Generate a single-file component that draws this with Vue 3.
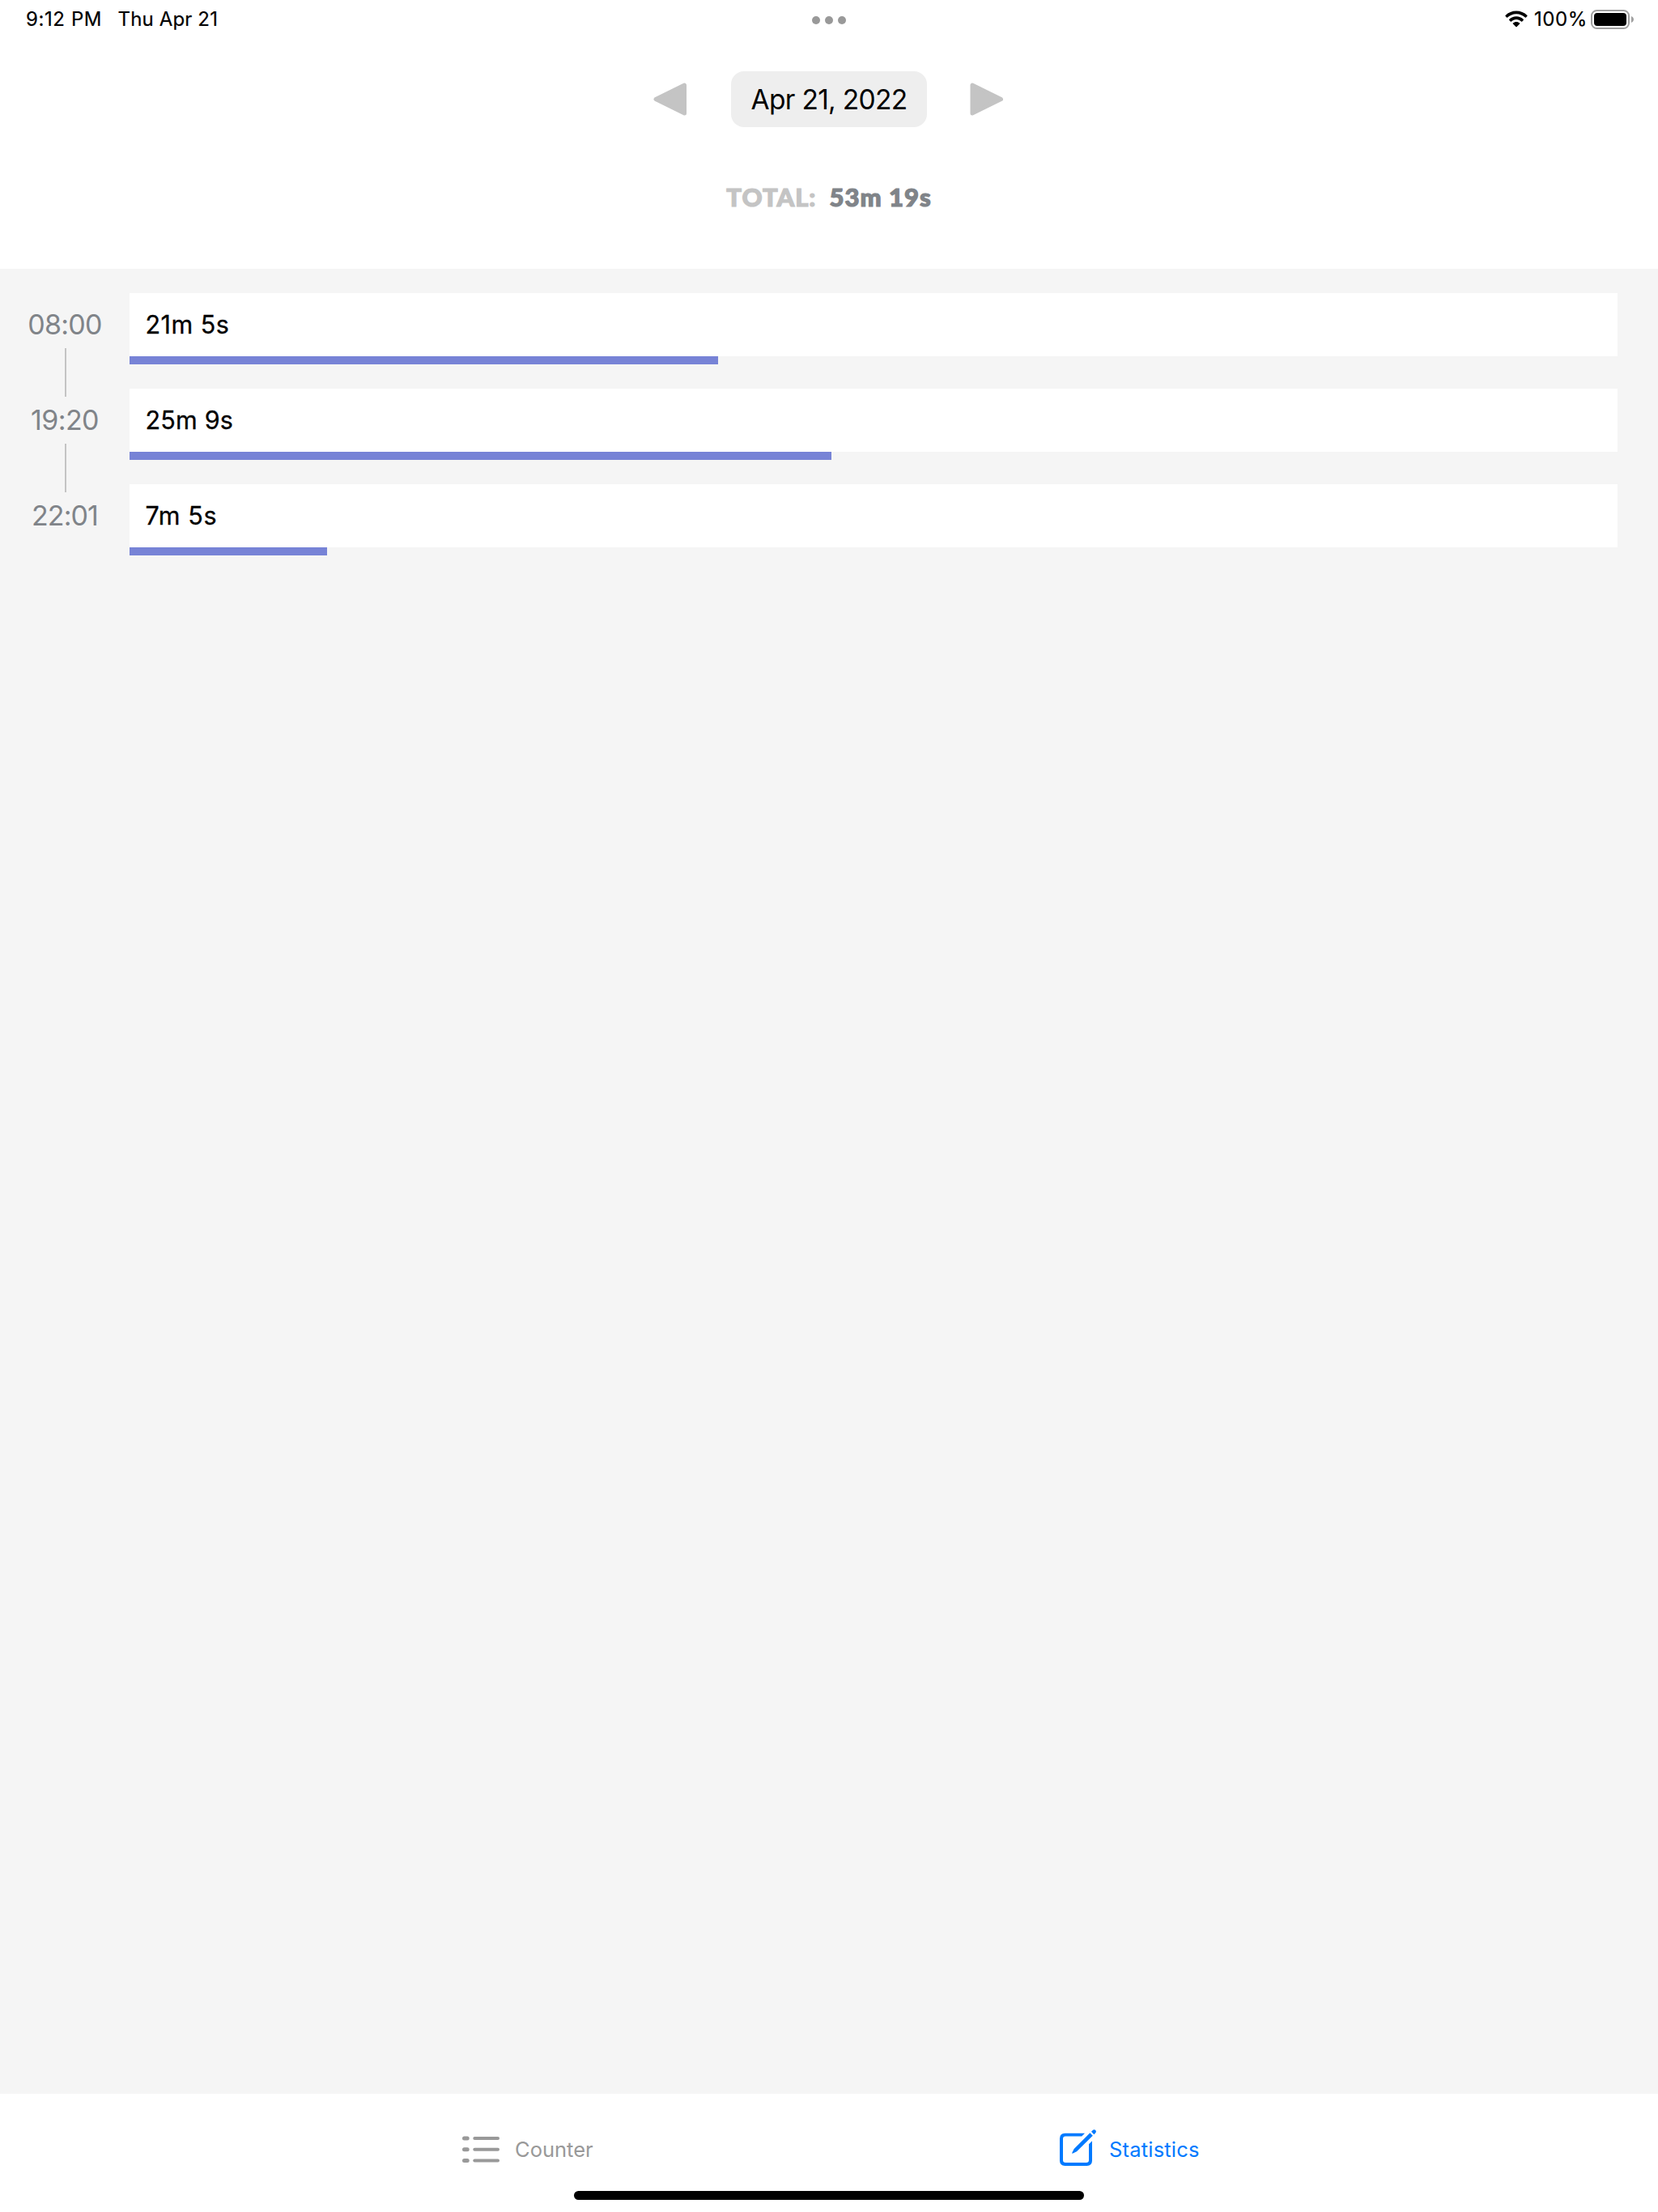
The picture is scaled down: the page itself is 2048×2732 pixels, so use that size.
<script setup>
const total = 53 * 60 + 19
const sessions = [
  { time: '08:00', label: '21m 5s', seconds: 1265, tracking: -0.75, labelTracking: 0.5 },
  { time: '19:20', label: '25m 9s', seconds: 1509, tracking: -0.6, labelTracking: 0.2 },
  { time: '22:01', label: '7m 5s', seconds: 425, tracking: -0.9, labelTracking: 0.6 },
]
</script>

<template>
  <div class="screen">
    <header class="status">
      <div class="status-left">
        <span class="clock">9:12 PM</span>
        <span class="day">Thu Apr 21</span>
      </div>
      <div class="dots"><i></i><i></i><i></i></div>
      <div class="status-right">
        <svg class="wifi" width="28" height="21" viewBox="0 0 28 21">
          <path d="M14 0.6C8.8 .6 4.1 2.6 .6 5.9c-.4.4-.4.8 0 1.2L2 8.5c.4.4.8.4 1.2 0C6.1 5.8 9.8 4.2 14 4.2s7.900 1.600 10.800 4.300c.4.400.8.400 1.200 0l1.400-1.400c.4-.4.4-.8 0-1.200C23.900 2.600 19.200.6 14 .6z" />
          <path d="M14 7.300c-3.400 0-6.400 1.300-8.700 3.400-.4.400-.4.800 0 1.200l1.500 1.500c.3.300.8.300 1.200 0 1.600-1.500 3.700-2.400 6-2.400s4.400.9 6 2.400c.4.300.9.300 1.200 0l1.500-1.500c.4-.4.4-.8 0-1.200C20.400 8.600 17.400 7.300 14 7.300z" />
          <path d="M14 13.900c-1.600 0-3 .6-4.100 1.500-.4.400-.4.800 0 1.200l3.500 3.500c.4.400.8.400 1.200 0l3.500-3.500c.4-.4.4-.8 0-1.200-1.100-.9-2.500-1.500-4.100-1.500z" />
        </svg>
        <span class="percent">100%</span>
        <svg class="battery" width="54" height="24" viewBox="0 0 54 24">
          <rect x="1" y="1" width="46" height="22" rx="6.500" fill="none" stroke="#a0a0a0" stroke-width="2" />
          <rect x="4" y="4" width="40" height="16" rx="4" fill="#000" />
          <path d="M50 8v8c1.700-.7 3-2.200 3-4s-1.300-3.300-3-4z" fill="#a0a0a0" />
        </svg>
      </div>
    </header>

    <section class="summary">
      <div class="picker">
        <svg width="42" height="42" viewBox="0 0 42 42">
          <path d="M3 20.500 38.500 3v35z" class="arrow" />
        </svg>
        <div class="date"><span>Apr 21, 2022</span></div>
        <svg width="42" height="42" viewBox="0 0 42 42">
          <path d="M39.500 20.500 4 3v35z" class="arrow" />
        </svg>
      </div>
      <div class="total">
        <span class="total-label">TOTAL:</span>
        <span class="total-value">53m 19s</span>
      </div>
    </section>

    <main class="timeline">
      <article v-for="s in sessions" :key="s.time" class="row">
        <div class="when">
          <span class="time" :style="{ letterSpacing: s.tracking + 'px' }">{{ s.time }}</span>
          <div class="link"></div>
        </div>
        <div class="entry">
          <div class="card" :style="{ letterSpacing: s.labelTracking + 'px' }">{{ s.label }}</div>
          <div class="bar" :style="{ width: (s.seconds / total) * 100 + '%' }"></div>
        </div>
      </article>
    </main>

    <nav class="tabs">
      <div class="tab-row">
        <div class="tab">
          <svg class="list-icon" width="46" height="34" viewBox="0 0 46 34">
            <g fill="#999">
              <rect x="0" y="0.500" width="8.700" height="5" rx="2.500" />
              <rect x="0" y="14.200" width="8.700" height="5" rx="2.500" />
              <rect x="0" y="28" width="8.700" height="5" rx="2.500" />
              <rect x="13.300" y="1" width="32.700" height="4" rx="2" />
              <rect x="13.300" y="14.800" width="32.700" height="4" rx="2" />
              <rect x="13.300" y="28.600" width="32.700" height="4" rx="2" />
            </g>
          </svg>
          <span class="counter">Counter</span>
        </div>
        <div class="tab active">
          <svg class="edit-icon" width="46" height="46" viewBox="0 0 46 46">
            <path d="M31 4.800 27.200 8.600H7.200Q4 8.600 4 11.800V37.800Q4 41 7.200 41H32.800Q36 41 36 37.800V18.200L40 14.200V38.500Q40 45 33.500 45H6.500Q0 45 0 38.500V11.300Q0 4.800 6.500 4.800z" />
            <path d="M37.400 4.300 40.800 7.700 21 27.300 15.900 29.800Q15.100 29.900 15.200 29L17.700 24z" />
            <path d="M39 2.800 40.800 1Q42.500-.4 44.200 1 45.600 2.700 44.200 4.300L42.300 6.200z" />
          </svg>
          <span class="statistics">Statistics</span>
        </div>
      </div>
      <div class="home"></div>
    </nav>
  </div>
</template>

<style scoped>
.screen {
  width: 2048px;
  height: 2732px;
  display: flex;
  flex-direction: column;
  background: #fff;
  font-family: Inter, "Liberation Sans", sans-serif;
  color: #000;
  overflow: hidden;
  white-space: nowrap;
}
.status {
  height: 48px;
  display: grid;
  grid-template-columns: 1fr auto 1fr;
  font-size: 24px;
  line-height: 48px;
  -webkit-text-stroke: 0.2px #000;
}
.status-left { display: flex; padding-left: 32px; }
.clock { width: 113.500px; letter-spacing: 0.600px; }
.day { letter-spacing: 0.15px; }
.dots { display: flex; gap: 6px; padding-top: 20px; }
.dots i { width: 10px; height: 10px; border-radius: 50%; background: #999; }
.status-right { display: flex; justify-content: flex-end; padding-right: 29px; }
.wifi { margin: 13px 8px 0 0; }
.percent { width: 70px; letter-spacing: 0.6px; }
.battery { margin-top: 12px; }

.summary { height: 284px; display: flex; flex-direction: column; align-items: center; }
.picker { margin-top: 40px; display: flex; align-items: center; gap: 53px; }
.picker svg { margin: 0 1px 0 -1px; }
.arrow { fill: #c4c4c4; stroke: #c4c4c4; stroke-width: 5px; stroke-linejoin: round; }
.date {
  width: 242px;
  height: 69px;
  border-radius: 16px;
  background: #eee;
  font-size: 33.5px;
  line-height: 70px;
  letter-spacing: -0.7px;
  text-align: center;
}
.total {
  margin-top: 66px;
  display: flex;
  font-family: Lato, sans-serif;
  font-size: 31px;
  font-weight: 900;
  line-height: 40px;
  gap: 16px;
}
.total-label { color: #c4c4c4; letter-spacing: 1px; -webkit-text-stroke: 1.2px #c4c4c4; }
.total-value { color: #808489; letter-spacing: 1px; -webkit-text-stroke: 1.2px #808489; }

.timeline { flex: 1; padding: 30px 50px 0 0; background: #f5f5f5; }
.row { display: flex; height: 118px; }
.when { width: 160px; display: flex; flex-direction: column; align-items: center; }
.time { height: 68px; font-size: 34px; font-weight: 400; line-height: 78px; color: #808489; }
.link { width: 2px; height: 60px; margin-left: 2px; background: #c4c4c4; flex: none; }
.row:last-child .link { display: none; }
.entry { flex: 1; }
.card {
  height: 78px;
  padding-left: 19.500px;
  background: #fff;
  font-size: 30.500px;
  font-weight: 400;
  line-height: 78px;
  -webkit-text-stroke: 0.300px #000;
}
.bar { height: 10px; background: #7783d6; }

.tabs { height: 146px; display: flex; flex-direction: column; align-items: center; }
.tab-row { height: 120px; align-self: stretch; display: flex; padding-left: 571px; }
.tab { display: flex; width: 738px; font-size: 25.500px; line-height: 138px; color: #999; }
.tab.active { color: #007aff; fill: #007aff; }
.list-icon { margin: 52px 19px 0 0; }
.edit-icon { margin: 44px 15px 0 0; }
.statistics { letter-spacing: 0.2px; }
.home { width: 630px; height: 11px; border-radius: 6px; background: #000; }
</style>

<style>
body { margin: 0; }
</style>
